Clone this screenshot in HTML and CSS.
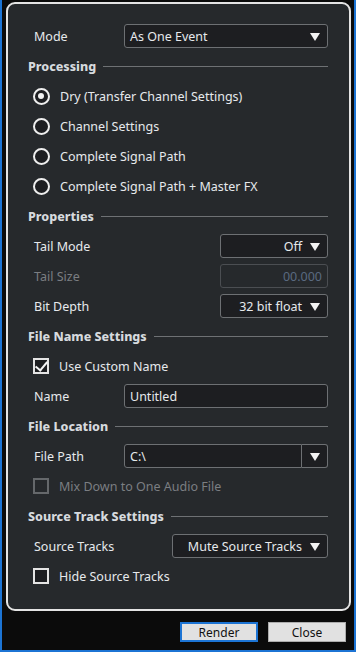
FILE: index.html
```html
<!DOCTYPE html>
<html lang="en">
<head>
	<meta charset="UTF-8">
	<title>Export Audio Mixdown</title>
	<link rel="stylesheet" href="styles.css">
</head>
<body>
	<div class="window">
		<div class="panel">
			<div class="row">
				<span class="label">Mode</span>
				<div class="select w-wide"><span class="value">As One Event</span><i class="arrow"></i></div>
			</div>

			<div class="head"><span>Processing</span></div>
			<div class="row opt"><i class="radio on"></i><span>Dry (Transfer Channel Settings)</span></div>
			<div class="row opt"><i class="radio"></i><span>Channel Settings</span></div>
			<div class="row opt"><i class="radio"></i><span>Complete Signal Path</span></div>
			<div class="row opt"><i class="radio"></i><span>Complete Signal Path + Master FX</span></div>

			<div class="head"><span>Properties</span></div>
			<div class="row">
				<span class="label">Tail Mode</span>
				<div class="select w-small right"><span class="value">Off</span><i class="arrow"></i></div>
			</div>
			<div class="row">
				<span class="label off">Tail Size</span>
				<div class="field w-small right disabled">00.000</div>
			</div>
			<div class="row">
				<span class="label">Bit Depth</span>
				<div class="select w-small right"><span class="value">32 bit float</span><i class="arrow"></i></div>
			</div>

			<div class="head"><span>File Name Settings</span></div>
			<div class="row opt"><i class="check on"></i><span>Use Custom Name</span></div>
			<div class="row">
				<span class="label">Name</span>
				<div class="field w-wide">Untitled</div>
			</div>

			<div class="head"><span>File Location</span></div>
			<div class="row">
				<span class="label">File Path</span>
				<div class="pathbox">
					<div class="field path">C:\</div>
					<div class="drop"><i class="arrow"></i></div>
				</div>
			</div>
			<div class="row opt"><i class="check disabled"></i><span class="off">Mix Down to One Audio File</span></div>

			<div class="head"><span>Source Track Settings</span></div>
			<div class="row">
				<span class="label">Source Tracks</span>
				<div class="select w-mid right"><span class="value">Mute Source Tracks</span><i class="arrow"></i></div>
			</div>
			<div class="row opt"><i class="check"></i><span>Hide Source Tracks</span></div>
		</div>

		<div class="footer">
			<button class="btn primary">Render</button>
			<button class="btn">Close</button>
		</div>
	</div>
</body>
</html>
```

FILE: styles.css
```css
* {
	margin: 0;
	padding: 0;
	box-sizing: border-box;
}

body {
	background: #0b0b0b;
	font-family: "Noto Sans", "Open Sans", sans-serif;
	font-size: 12.5px;
	color: #e6e9ec;
}

.window {
	width: 356px;
	height: 652px;
	border: 2px solid #1c74d4;
	border-top: 0;
	padding: 2px 3px 0 4px;
	background: #0b0b0b;
}

.panel {
	height: 609px;
	border: 2px solid #e4e4e4;
	border-radius: 9px;
	background: #26292c;
	padding: 17px 21px 0 20px;
}

.row {
	height: 30px;
	display: flex;
	align-items: center;
	padding-left: 6px;
}

.row .label {
	flex: 1;
}

.off {
	color: #7b7e82;
}

.head {
	height: 30px;
	display: flex;
	align-items: center;
	font-weight: 800;
	color: #d6dade;
}

.head::after {
	content: "";
	flex: 1;
	height: 1px;
	background: #6e7174;
	margin-left: 7px;
}

.select,
.field,
.drop {
	height: 24px;
	border: 1px solid #6d7073;
	border-radius: 3px;
	background: #1d1e21;
	display: flex;
	align-items: center;
	padding: 0 7px 0 5px;
}

.select .value {
	flex: 1;
}

.select.right .value {
	text-align: right;
	padding-right: 8px;
}

.w-wide {
	width: 204px;
}

.w-small {
	width: 108px;
}

.w-mid {
	width: 156px;
}

.field.right {
	justify-content: flex-end;
	padding-right: 5px;
}

.field.disabled {
	background: #26292c;
	border-color: #4b4e52;
	color: #5a6a80;
}

.arrow {
	width: 0;
	height: 0;
	border-left: 5px solid transparent;
	border-right: 5px solid transparent;
	border-top: 8px solid #f2f2f2;
	margin-top: 1px;
}

.pathbox {
	width: 204px;
	display: flex;
}

.pathbox .path {
	flex: 1;
	border-radius: 3px 0 0 3px;
}

.pathbox .drop {
	width: 26px;
	border-left: 0;
	border-radius: 0 3px 3px 0;
	justify-content: center;
	padding: 0;
}

.opt {
	padding-left: 5px;
}

.opt span {
	margin-left: 10px;
}

.radio {
	width: 17px;
	height: 17px;
	border: 2.5px solid #eeeeee;
	border-radius: 50%;
	background: #1d1e21;
	position: relative;
}

.radio.on::after {
	content: "";
	position: absolute;
	left: 3px;
	top: 3px;
	width: 6px;
	height: 6px;
	border-radius: 50%;
	background: #f2f2f2;
}

.check {
	width: 16px;
	height: 16px;
	border: 2px solid #e4e4e4;
	background: #1d1e21;
	position: relative;
}

.check.on::after {
	content: "";
	position: absolute;
	left: 3px;
	top: -1px;
	width: 5px;
	height: 10px;
	border: solid #f4f4f4;
	border-width: 0 2px 2px 0;
	transform: rotate(40deg);
}

.check.disabled {
	border-color: #65686b;
	background: #26292c;
}

.footer {
	display: flex;
	justify-content: flex-end;
	gap: 10px;
	padding: 11px 5px 0 0;
}

.btn {
	height: 20px;
	width: 78px;
	background: #e1e1e1;
	border: 1px solid #adadad;
	font-family: "Noto Sans", "Open Sans", sans-serif;
	font-size: 12px;
	color: #111;
}

.btn.primary {
	border: 2px solid #1c74d4;
}
```
